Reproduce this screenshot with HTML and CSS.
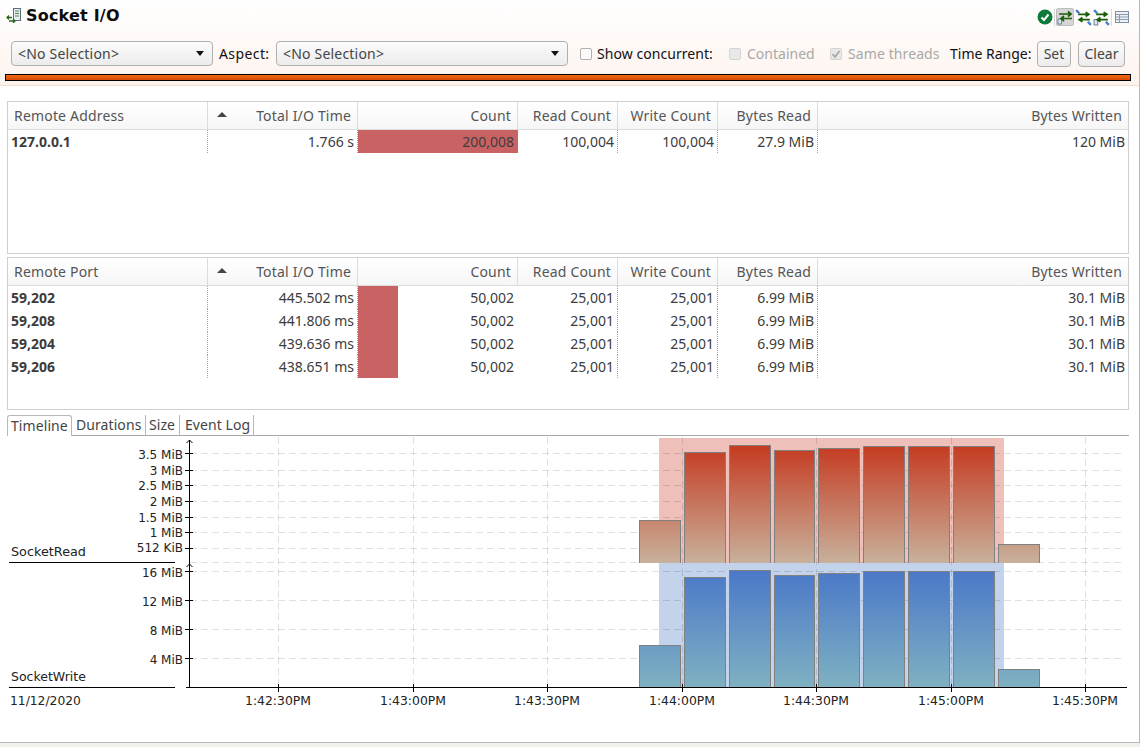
FILE: index.html
```html
<!DOCTYPE html>
<html lang="en">
<head>
<meta charset="utf-8">
<title>Socket I/O</title>
<link rel="stylesheet" href="styles.css">
</head>
<body>
<div class="app">
  <header class="head">
    <div class="titlebar">
      <svg class="title-icon" width="16" height="16" viewBox="0 0 16 16"><rect x="7.500" y="1.500" width="7" height="12" fill="#e8edf2" stroke="#5b6b7a"/><path d="M9 4h4M9 6.500h4M9 9h4" stroke="#4d8a4d"/><path d="M1 10.500h5M3 8.500l-2 2 2 2M3 14h6M7 12l2 2-2 2" stroke="#2a6a1c" stroke-width="1.300" fill="none"/></svg>
      <h1 class="title">Socket I/O</h1>
      <div class="tools">
        <svg width="16" height="16" viewBox="0 0 16 16"><circle cx="8" cy="8" r="7.500" fill="#0e7a3a"/><path d="M4.500 8.500l2.500 2.500 4.500-5.500" stroke="#fff" stroke-width="2" fill="none"/></svg>
        <span class="tool-sep"></span>
        <span class="tool-on"><svg width="16" height="16" viewBox="0 0 16 16"><rect x="1" y="10" width="3.500" height="5" fill="#dfe6f2" stroke="#56708f" stroke-width=".8"/><path d="M2 5h12M11 2.500L14 5l-3 2.500M15 9.500H4M7 7L4 9.500 7 12" stroke="#1a5e06" stroke-width="1.700" fill="none"/></svg></span>
        <svg width="17" height="17" viewBox="0 0 16 16"><path d="M1 1l3 3" stroke="#3f7fd0" stroke-width="2.200"/><path d="M3 5h10M10 3l3 2-3 2M14 10H4M7 8l-3 2 3 2" stroke="#1a5e06" stroke-width="1.700" fill="none"/><path d="M12 12l3 3" stroke="#3f7fd0" stroke-width="2.200"/></svg>
        <svg width="17" height="17" viewBox="0 0 16 16"><rect x="1" y="10" width="3.500" height="5" fill="#dfe6f2" stroke="#56708f" stroke-width=".8"/><path d="M1 1l3 3" stroke="#3f7fd0" stroke-width="2.200"/><path d="M3 5h10M10 3l3 2-3 2M14 10H4M7 8l-3 2 3 2" stroke="#1a5e06" stroke-width="1.700" fill="none"/><path d="M12 12l3 3" stroke="#3f7fd0" stroke-width="2.200"/></svg>
        <span class="tool-sep"></span>
        <svg class="tool-table" width="14" height="12" viewBox="0 0 14 12"><rect x=".5" y=".5" width="13" height="11" fill="#eef2f8" stroke="#7f8ea3"/><path d="M1 3.500h12M1 6h12M1 8.500h12M4.500 3.500v8" stroke="#8b9ab0"/></svg>
      </div>
    </div>
    <div class="toolbar">
      <div class="select sel-a"><span>&lt;No Selection&gt;</span><i class="caret"></i></div>
      <span class="lbl lbl-aspect">Aspect:</span>
      <div class="select sel-b"><span>&lt;No Selection&gt;</span><i class="caret"></i></div>
      <span class="check"></span>
      <span class="lbl lbl-conc">Show concurrent:</span>
      <span class="check dis"></span>
      <span class="lbl dim lbl-cont">Contained</span>
      <span class="check dis on"><svg width="12" height="12" viewBox="0 0 12 12"><path d="M2.500 6l2.500 3 4.500-6" stroke="#a9a9a9" stroke-width="1.800" fill="none"/></svg></span>
      <span class="lbl dim lbl-same">Same threads</span>
      <span class="lbl lbl-range">Time Range:</span>
      <button class="btn btn-set">Set</button>
      <button class="btn btn-clear">Clear</button>
    </div>
    <div class="progress"></div>
  </header>

  <section class="tbl tbl-1">
    <div class="row hdr">
      <div class="c l">Remote Address</div><div class="c"><i class="sort"></i>Total I/O Time</div><div class="c">Count</div><div class="c">Read Count</div><div class="c">Write Count</div><div class="c">Bytes Read</div><div class="c last">Bytes Written</div>
    </div>
    <div class="row">
      <div class="c l">127.0.0.1</div><div class="c">1.766 s</div><div class="c bar" style="background-size:100% 100%">200,008</div><div class="c">100,004</div><div class="c">100,004</div><div class="c">27.9 MiB</div><div class="c last">120 MiB</div>
    </div>
  </section>

  <section class="tbl tbl-2">
    <div class="row hdr">
      <div class="c l">Remote Port</div><div class="c"><i class="sort"></i>Total I/O Time</div><div class="c">Count</div><div class="c">Read Count</div><div class="c">Write Count</div><div class="c">Bytes Read</div><div class="c last">Bytes Written</div>
    </div>
    <div class="row"><div class="c l">59,202</div><div class="c">445.502 ms</div><div class="c bar" style="background-size:25% 100%">50,002</div><div class="c">25,001</div><div class="c">25,001</div><div class="c">6.99 MiB</div><div class="c last">30.1 MiB</div></div>
    <div class="row"><div class="c l">59,208</div><div class="c">441.806 ms</div><div class="c bar" style="background-size:25% 100%">50,002</div><div class="c">25,001</div><div class="c">25,001</div><div class="c">6.99 MiB</div><div class="c last">30.1 MiB</div></div>
    <div class="row"><div class="c l">59,204</div><div class="c">439.636 ms</div><div class="c bar" style="background-size:25% 100%">50,002</div><div class="c">25,001</div><div class="c">25,001</div><div class="c">6.99 MiB</div><div class="c last">30.1 MiB</div></div>
    <div class="row"><div class="c l">59,206</div><div class="c">438.651 ms</div><div class="c bar" style="background-size:25% 100%">50,002</div><div class="c">25,001</div><div class="c">25,001</div><div class="c">6.99 MiB</div><div class="c last">30.1 MiB</div></div>
  </section>

  <nav class="tabs">
    <span class="tab active">Timeline</span><span class="tab t-dur">Durations</span><span class="tab t-size">Size</span><span class="tab t-log">Event Log</span>
  </nav>

  <svg class="chart" width="1139" height="306" viewBox="0 436 1139 306">
    <defs>
      <linearGradient id="gr" gradientUnits="userSpaceOnUse" x1="0" y1="445" x2="0" y2="563"><stop offset="0" stop-color="#c53a20"/><stop offset="1" stop-color="#c8b19c"/></linearGradient>
      <linearGradient id="gw" gradientUnits="userSpaceOnUse" x1="0" y1="570" x2="0" y2="687"><stop offset="0" stop-color="#4a78c8"/><stop offset="1" stop-color="#7fb1c2"/></linearGradient>
      <clipPath id="clip-read"><rect x="0" y="436" width="1139" height="127"/></clipPath>
    </defs>
    <rect x="659" y="438" width="345" height="125" fill="#efc0ba"/>
    <rect x="659" y="563" width="345" height="124" fill="#c3d3ec"/>
    <g class="grid">
      <path d="M190 453.500H1125M190 470.500H1125M190 485.500H1125M190 501.500H1125M190 517.500H1125M190 532.500H1125M190 548.500H1125M190 562.500H1125M190 571.500H1125M190 600.500H1125M190 629.500H1125M190 658.500H1125"/>
      <path d="M278.500 437V687M413.500 437V687M547.500 437V687M682.500 437V687M816.500 437V687M951.500 437V687M1085.500 437V687"/>
    </g>
    <g class="bars-r" clip-path="url(#clip-read)">
      <rect x="639.500" y="520.500" width="41" height="43"/><rect x="684.500" y="452.500" width="41" height="111"/><rect x="729.500" y="445.500" width="41" height="118"/><rect x="774.500" y="450.500" width="40" height="113"/><rect x="818.500" y="448.500" width="41" height="115"/><rect x="863.500" y="446.500" width="41" height="117"/><rect x="908.500" y="446.500" width="41" height="117"/><rect x="953.500" y="446.500" width="41" height="117"/><rect x="998.500" y="544.500" width="41" height="19"/>
    </g>
    <g class="bars-w">
      <rect x="639.500" y="645.500" width="41" height="42"/><rect x="684.500" y="577.500" width="41" height="110"/><rect x="729.500" y="570.500" width="41" height="117"/><rect x="774.500" y="575.500" width="40" height="112"/><rect x="818.500" y="573.500" width="41" height="114"/><rect x="863.500" y="571.500" width="41" height="116"/><rect x="908.500" y="571.500" width="41" height="116"/><rect x="953.500" y="571.500" width="41" height="116"/><rect x="998.500" y="669.500" width="41" height="18"/>
    </g>
    <g class="axis">
      <path d="M189.500 440V687.500M186 687.500H1127M186.500 443l3-3 3 3M186.500 567l3-3 3 3"/>
      <path d="M185 453.500h8M185 470.500h8M185 485.500h8M185 501.500h8M185 517.500h8M185 532.500h8M185 548.500h8M185 571.500h8M185 600.500h8M185 629.500h8M185 658.500h8"/>
      <path d="M278.500 684v8M413.500 684v8M547.500 684v8M682.500 684v8M816.500 684v8M951.500 684v8M1085.500 684v8"/>
      <path d="M9 562.500H175M9 687.500H175"/>
    </g>
    <g class="ylab">
      <text x="183" y="459">3.5 MiB</text><text x="183" y="475">3 MiB</text><text x="183" y="490">2.5 MiB</text><text x="183" y="506">2 MiB</text><text x="183" y="522">1.5 MiB</text><text x="183" y="537">1 MiB</text><text x="183" y="552">512 KiB</text>
      <text x="183" y="577">16 MiB</text><text x="183" y="606">12 MiB</text><text x="183" y="635">8 MiB</text><text x="183" y="664">4 MiB</text>
    </g>
    <g class="xlab">
      <text x="278" y="705">1:42:30PM</text><text x="413" y="705">1:43:00PM</text><text x="547" y="705">1:43:30PM</text><text x="682" y="705">1:44:00PM</text><text x="816" y="705">1:44:30PM</text><text x="951" y="705">1:45:00PM</text><text x="1085" y="705">1:45:30PM</text>
    </g>
    <g class="name">
      <text x="11" y="556">SocketRead</text><text class="name-w" x="11" y="681">SocketWrite</text><text class="name-d" x="10" y="705">11/12/2020</text>
    </g>
  </svg>
</div>
</body>
</html>
```
FILE: styles.css
```css
* { box-sizing: border-box; }
html, body { margin: 0; padding: 0; height: 100%; overflow: hidden; background: #f1f0ec; }
body { font-family: "Noto Sans", "Open Sans", sans-serif; font-size: 14px; color: #3c3c3c; }
.app { width: 1140px; height: 743px; background: #fff; border-right: 1px solid #b8b8b8; border-bottom: 1px solid #b8b8b8; overflow: hidden; }

.head { height: 86px; padding: 0 8px 0 5px; background: linear-gradient(#fff, #fdf3ee); border-bottom: 1px solid #f6dccb; }
.titlebar { display: flex; align-items: center; height: 30px; padding-left: 1px; }
.title-icon { margin-right: 4px; }
.title { margin: 0; font: bold 16px "DejaVu Sans", sans-serif; letter-spacing: .2px; color: #0d0d0d; }
.tools { display: flex; align-items: center; gap: 1px; margin-left: auto; margin-right: 2px; padding-top: 4px; }
.tool-sep { width: 1px; height: 17px; background: #d8d8d8; }
.tool-on { display: flex; padding: 1px; background: #d6d6d6; border-radius: 3px; box-shadow: inset 0 0 0 1px #bdbdbd; }
.tool-table { margin-left: 2px; }

.toolbar { display: flex; align-items: center; height: 25px; margin-top: 11px; padding-left: 6px; white-space: nowrap; color: #111; }
.select { display: flex; align-items: center; justify-content: space-between; height: 25px; padding: 0 8px 0 6px; background: linear-gradient(#fbfbfb, #ececec); border: 1px solid #b0b0b0; border-radius: 4px; color: #444; letter-spacing: .2px; }
.sel-a { width: 202px; }
.sel-b { width: 292px; }
.caret { width: 0; height: 0; border-left: 4.500px solid transparent; border-right: 4.500px solid transparent; border-top: 5px solid #111; }
.lbl { display: block; }
.lbl-aspect { width: 51px; margin: 0 6px; letter-spacing: .4px; }
.check { display: flex; flex: none; width: 12px; height: 12px; margin: 0 5px 0 12px; background: #fafafa; border: 1px solid #b0b0b0; border-radius: 2px; }
.check.dis { background: #e8e8e8; border-color: #d4d4d4; }
.check.on svg { margin: -1px; }
.lbl-conc { width: 116px; margin-right: 4px; letter-spacing: .05px; }
.lbl-cont { width: 68px; margin-right: 4px; padding-left: 1px; }
.lbl-same { width: 93px; margin-right: 10px; padding-left: 1px; letter-spacing: .1px; }
.lbl-range { width: 81px; margin-right: 6px; }
.dim { color: #a8a8a8; }
.btn { height: 26px; padding: 0; font: inherit; color: #444; background: linear-gradient(#fbfbfb, #ececec); border: 1px solid #b0b0b0; border-radius: 4px; }
.btn-set { width: 34px; margin-right: 7px; }
.btn-clear { width: 47px; }
.progress { height: 7px; margin-top: 8px; background: linear-gradient(#f26a10, #d84a08); border: 1px solid #000; width: 1126px; }

.tbl { width: 1122px; height: 153px; margin-left: 7px; border: 1px solid #cfcfcf; background: #fff; overflow: hidden; }
.tbl-1 { margin-top: 15px; }
.tbl-2 { margin-top: 3px; }
.row { display: grid; grid-template-columns: 200px 150px 160px 100px 100px 100px 1fr; height: 23px; }
.c { position: relative; padding-right: 3px; line-height: 23px; text-align: right; white-space: nowrap; border-right: 1px dotted #e58a63; }
.c.last { border-right: 0; }
.c.l { padding: 0 0 0 3px; text-align: left; font-weight: 700; }
.bar { padding-right: 4px; background-image: linear-gradient(#c96363, #c96363); background-repeat: no-repeat; border-right: 0; }
.hdr { height: 28px; background: linear-gradient(#fff, #f6f6f6); border-bottom: 1px solid #dcdcdc; color: #555; letter-spacing: .18px; }
.hdr .c { padding-right: 6px; line-height: 27px; border-right: 1px solid #dcdcdc; }
.hdr .c.l { padding: 0 0 0 6px; font-weight: 400; }
.hdr .c.last { border-right: 0; }
.sort { position: absolute; left: 9px; top: 10px; width: 0; height: 0; border-left: 5px solid transparent; border-right: 5px solid transparent; border-bottom: 5px solid #444; }

.tabs { display: flex; width: 1122px; height: 24px; margin: 2px 0 0 7px; padding-top: 3px; border-bottom: 1px solid #a8a8a8; color: #444; letter-spacing: .08px; }
.tab { height: 20px; padding-left: 5px; line-height: 20px; border-right: 1px solid #b8b8b8; white-space: nowrap; }
.tab.active { width: 65px; height: 21px; padding-left: 3px; background: #fff; border: 1px solid #b8b8b8; border-bottom: 0; border-radius: 3px 3px 0 0; }
.t-dur { width: 74px; padding-left: 4px; }
.t-size { width: 34px; padding-left: 3px; }
.t-log { width: 74px; padding-left: 5px; }

.chart { display: block; }
.grid path { fill: none; stroke: #000; stroke-opacity: .12; stroke-dasharray: 7 4; }
.bars-r rect { fill: url(#gr); stroke: #808080; }
.bars-w rect { fill: url(#gw); stroke: #808080; }
.axis path { fill: none; stroke: #000; }
.chart text { font-family: "DejaVu Sans", sans-serif; font-size: 12px; fill: #222; }
.ylab text { text-anchor: end; }
.xlab text { text-anchor: middle; font-size: 12.400px; }
.name text { font-size: 12.800px; }
.name .name-w { font-size: 12.500px; }
.name .name-d { font-size: 12.300px; }
```
